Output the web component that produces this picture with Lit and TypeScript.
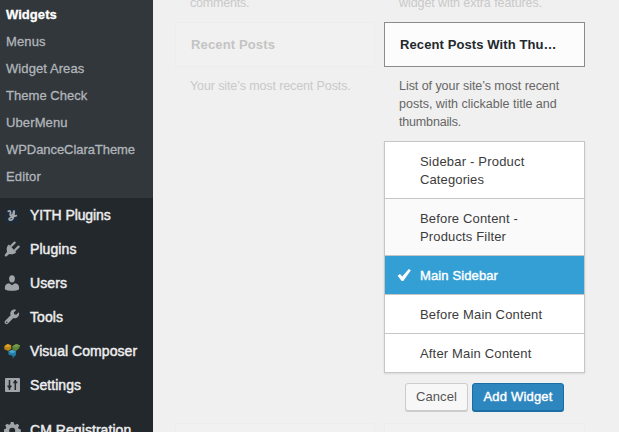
import { LitElement, html, css, svg } from "lit";
import { customElement, property } from "lit/decorators.js";
import { classMap } from "lit/directives/class-map.js";

const ICONS: Record<string, unknown> = {
  yith: svg`<rect x="1" y="2" width="13" height="14" rx="2" fill="#1c2a3b"/><path d="M4.300 4.200c1.800-.8 2.600.4 2.200 1.800-.4 1.400-.5 2.500.6 2.500 1.500 0 2.300-1.800 2.700-4.300M10.200 4.200c-.2 3-.4 6.300-1.800 8-1.100 1.400-3.300 1.200-3.300-.2 0-1.600 3.600-2.200 7.200-3.300" fill="none" stroke="#a5a9ac" stroke-width="1.800" stroke-linecap="round"/>`,
  plugins: svg`<path d="M4.700 3.600 12.300 11.200c-2 1.900-4.700 2.400-7 1.700L2.600 15.300c-1.200.6-2.400-.5-1.600-1.700L3.100 10.800C2.200 8.200 2.700 5.500 4.700 3.600z" fill="#a0a5aa"/><path d="M7.200 5 10.600 1.600M11.200 9 14.600 5.600" stroke="#a0a5aa" stroke-width="2.300" stroke-linecap="round"/>`,
  users: svg`<ellipse cx="8" cy="3.800" rx="2.900" ry="3.600" fill="#a0a5aa"/><path d="M.9 14.200c-.1-4 1.300-5.700 4.200-5.900L8 10.300l2.900-2c2.900.2 4.300 1.900 4.200 5.900-2.700 2-11.500 2-14.200 0z" fill="#a0a5aa"/>`,
  tools: svg`<path d="M14.900 3.200 12.300 5.800 10.200 5.300 9.800 3.400 12.200.9C10.300.1 8.100.7 7 2.300c-.9 1.300-.9 2.700-.4 4L1.200 11.800c-1.800 2 .8 4.600 2.800 2.800l5.400-5.500c3.500 1.100 6.600-2.300 5.500-5.900z" fill="#a0a5aa"/><circle cx="2.700" cy="13.200" r=".8" fill="#23282d"/>`,
  composer: svg`<path d="M.3 3.300 3.600.9l3.700 1.500v3.300L4.300 8 .3 6.200z" fill="#b98516"/><path d="m3.600.9 3.700 1.500-3 1.900-4-1z" fill="#dba526"/><path d="m8.400 3.300 3.800-2.200 4 1.300-1.100 2.800-2.400 2.300-1.800.4-2.500-1.600z" fill="#5e893b"/><path d="m8.400 3.300 3.800-2.200 4 1.300-4 1.700z" fill="#789c4b"/><path d="m4.400 8.800 3.500-2 4.100 1.600v3.300l-3.400 3.700.3-2.300-4.500-1.500z" fill="#247da9"/><path d="m4.400 8.800 3.500-2 4.100 1.600-3.400 1.900z" fill="#45a8d2"/>`,
  settings: svg`<rect x="1" y="1" width="15" height="14" rx="1" fill="#a0a5aa"/><path d="M5.500 3v10M11.300 3v10M3.500 9.200h4M9.300 5.400h4" stroke="#23282d" stroke-width="1.500"/><path d="m3.500 9.500 2 2.500 2-2.500zM9.300 5.500l2-2.500 2 2.500z" fill="#23282d"/>`,
  gear: svg`<path d="m6.900.1 2.600 0 .6 2.200 1.300.5 2-1.100 1.800 1.800-1.100 2 .5 1.300 2.200.6v2.600l-2.200.6-.5 1.300 1.100 2-1.800 1.800-2-1.100-1.300.5-.6 2.200H6.900l-.6-2.200-1.300-.5-2 1.100-1.800-1.800 1.100-2-.5-1.300-2.200-.6V7.400l2.200-.6.5-1.300-1.100-2L3 1.700l2 1.100 1.300-.5z" fill="#a0a5aa"/><circle cx="8.200" cy="8.700" r="3" fill="#23282d"/>`,
};

const fit = (s: number) => `letter-spacing:${s}px`;

@customElement("admin-menu")
class AdminMenu extends LitElement {
  static styles = css`
    :host { display: block; width: 153px; flex: none; background: #23282d; white-space: nowrap; }
    .sub { background: #32373c; padding: 1px 0 8px 6px; }
    .sub-item { height: 27px; line-height: 27px; font-size: 13px; color: #b0b5b9; -webkit-text-stroke: 0.3px; }
    .current { color: #fff; font-weight: 700; }
    .item { height: 34px; display: flex; align-items: center; color: #eee; font-size: 14px; line-height: 34px; -webkit-text-stroke: 0.45px; }
    .gap { margin-top: 11px; }
    svg { width: 17px; height: 17px; margin: 0 9px 0 4px; flex: none; display: block; }
  `;
  sub: [string, number][] = [["Widgets", 0.05], ["Menus", 0.12], ["Widget Areas", 0.08], ["Theme Check", 0.04], ["UberMenu", 0.12], ["WPDanceClaraTheme", -0.06], ["Editor", 0.15]];
  items: [string, string, number][] = [["yith", "YITH Plugins", -0.08], ["plugins", "Plugins", 0.08], ["users", "Users", 0.1], ["tools", "Tools", 0.08], ["composer", "Visual Composer", 0.05], ["settings", "Settings", 0.07], ["gear", "CM Registration", 0.06]];
  render() {
    return html`<div class="sub">${this.sub.map(([t, s], i) => html`<div class=${classMap({ "sub-item": true, current: i === 0 })}><span style=${fit(s)}>${t}</span></div>`)}</div>
      ${this.items.map(([icon, t, s]) => html`<div class=${classMap({ item: true, gap: icon === "gear" })}><svg viewBox="0 0 17 17">${ICONS[icon]}</svg><span style=${fit(s)}>${t}</span></div>`)}`;
  }
}

@customElement("sidebar-chooser")
class SidebarChooser extends LitElement {
  @property({ type: Number }) selected = 2;
  static styles = css`
    :host { display: block; }
    .list { border: 1px solid #c6c6c6; background: #fff; box-shadow: 0 1px 2px rgba(0,0,0,.1); margin-top: 10px; }
    .option { display: flex; padding: 11px 0 9px 11px; line-height: 18px; font-size: 13px; color: #3c3c3c; white-space: nowrap; }
    .option + .option { border-top: 1px solid #c6c6c6; }
    .hover { background: #fafafa; }
    .selected { background: #349fd4; color: #fff; -webkit-text-stroke: 0.4px; }
    .mark { width: 24px; height: 18px; flex: none; }
    .mark svg { display: block; margin-top: 1px; }
    .line { display: block; }
    .actions { display: flex; gap: 4px; margin: 10px 0 0 21px; }
    button { box-sizing: border-box; height: 28px; padding: 0; font: 13px/26px "Liberation Sans", Arial, sans-serif; border-radius: 3px; white-space: nowrap; }
    .cancel { width: 63px; color: #555; background: #f7f7f7; border: 1px solid #ccc; box-shadow: 0 1px 0 #ccc; }
    .add { width: 92px; color: #fff; background: #2e86bf; border: 1px solid #1c6fa5; box-shadow: 0 1px 0 #1c6fa5; -webkit-text-stroke: 0.4px; }
  `;
  options: [string, number][][] = [
    [["Sidebar - Product", 0.2], ["Categories", 0.12]],
    [["Before Content -", 0.16], ["Products Filter", 0.15]],
    [["Main Sidebar", 0.12]],
    [["Before Main Content", 0.16]],
    [["After Main Content", 0.17]],
  ];
  render() {
    return html`<div class="list">${this.options.map((lines, i) => html`<div class=${classMap({ option: true, hover: i === 1, selected: i === this.selected })}>
        <div class="mark">${i === this.selected ? html`<svg width="16" height="14" viewBox="0 0 16 14"><path d="M1.600 7.800 4 5.900 6.200 8.600 12.800 .9 14.900 2.200 7.300 12.900H5.700z" fill="#fff"/></svg>` : ""}</div>
        <div>${lines.map(([t, s]) => html`<span class="line" style=${fit(s)}>${t}</span>`)}</div></div>`)}</div>
      <div class="actions"><button class="cancel"><span style=${fit(0.1)}>Cancel</span></button><button class="add"><span style=${fit(0.2)}>Add Widget</span></button></div>`;
  }
}

@customElement("app-root")
class AppRoot extends LitElement {
  static styles = css`
    :host { display: flex; width: 619px; height: 432px; overflow: hidden; background: #f0f0f0; font-family: "Liberation Sans", Arial, sans-serif; }
    main { flex: 1; display: grid; grid-template-columns: 200px 201px; column-gap: 9px; padding-left: 22px; align-content: start; white-space: nowrap; }
    .column { display: flex; flex-direction: column; }
    .text { font-size: 12.5px; line-height: 18px; color: #666; padding-left: 15px; }
    .text span { display: block; }
    .faded { color: #c9c9c9; }
    .before { margin-top: -6px; height: 28px; }
    .card { box-sizing: border-box; height: 45px; padding-left: 15px; font-size: 13px; font-weight: 700; line-height: 43px; border: 1px solid #ededed; background: #f1f1f1; color: #c4c4c4; }
    .active { border-color: #8b8b8b; background: #fcfcfc; color: #23282d; }
    .desc { margin-top: 10px; }
    .left-next { margin-top: 328px; }
    .next { margin-top: 12px; }
  `;
  render() {
    return html`<admin-menu></admin-menu>
      <main>
        <div class="column">
          <div class="text faded before"><span style=${fit(-0.2)}>comments.</span></div>
          <div class="card"><span style=${fit(0.14)}>Recent Posts</span></div>
          <div class="text faded desc"><span style=${fit(-0.11)}>Your site’s most recent Posts.</span></div>
          <div class="card left-next"></div>
        </div>
        <div class="column">
          <div class="text faded before"><span style=${fit(-0.08)}>widget with extra features.</span></div>
          <div class="card active"><span style=${fit(0.1)}>Recent Posts With Thu…</span></div>
          <div class="text desc"><span style=${fit(-0.05)}>List of your site’s most recent</span><span style=${fit(0)}>posts, with clickable title and</span><span style=${fit(-0.17)}>thumbnails.</span></div>
          <sidebar-chooser></sidebar-chooser>
          <div class="card next"></div>
        </div>
      </main>`;
  }
}
